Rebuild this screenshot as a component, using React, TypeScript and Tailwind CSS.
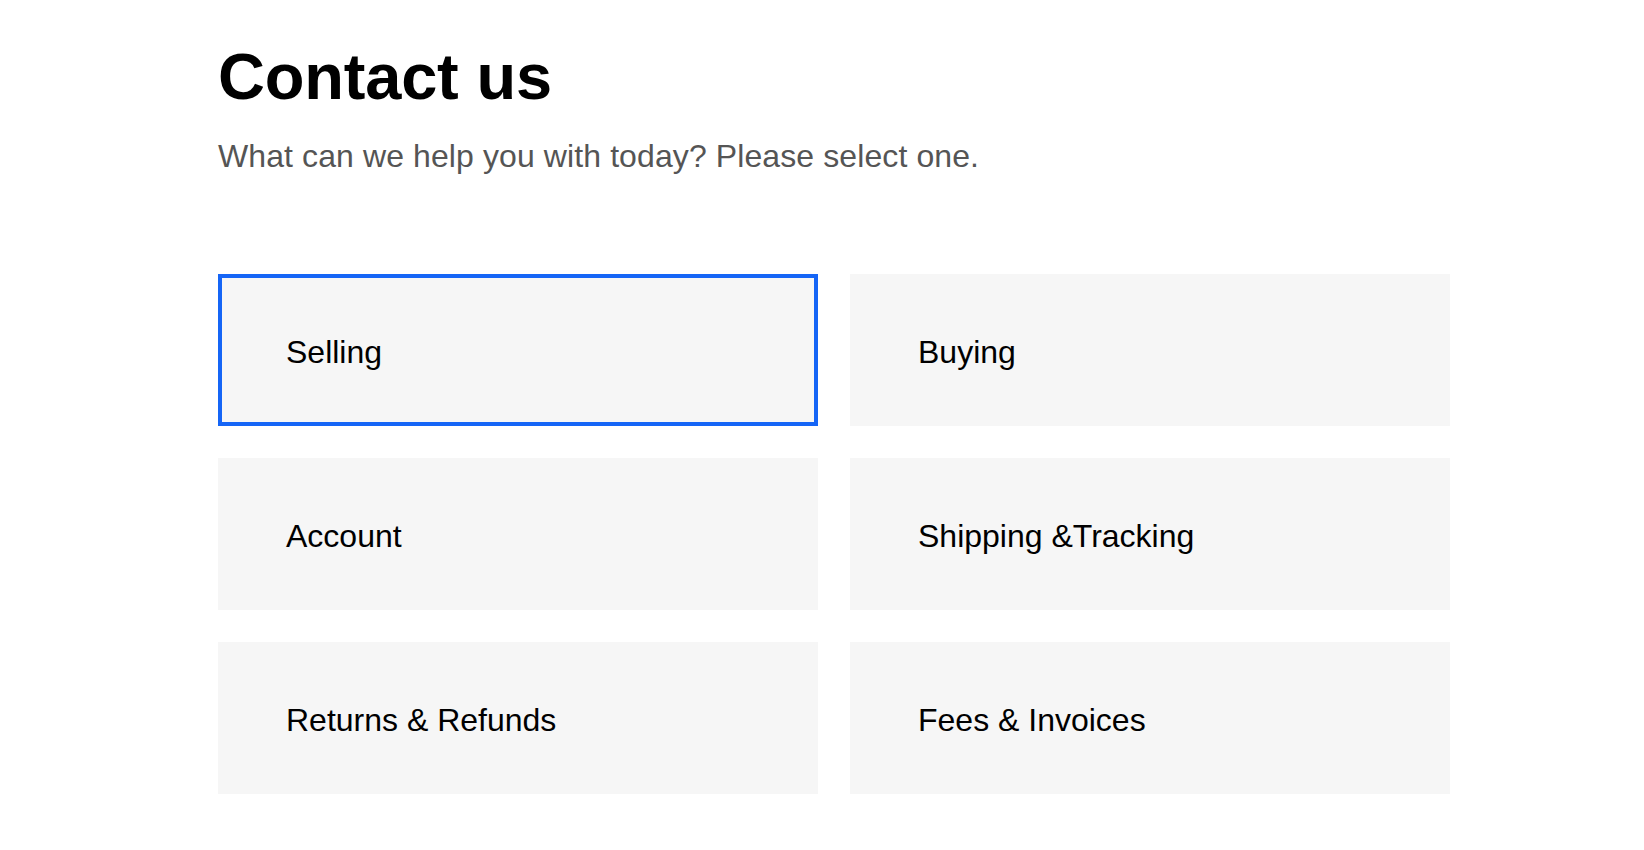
import { useState } from 'react'

const topics = [
  'Selling',
  'Buying',
  'Account',
  'Shipping &Tracking',
  'Returns & Refunds',
  'Fees & Invoices',
]

export default function App() {
  const [selected, setSelected] = useState('Selling')

  return (
    <div className="min-h-screen bg-white pl-[218px] pt-[44px] font-['Liberation_Sans',Arial,sans-serif] text-black">
      <h1 className="text-[65px] font-bold leading-none tracking-[-0.2px]">Contact us</h1>
      <p className="mt-[31px] text-[32px] leading-none tracking-[0.1px] text-[#555555]">
        What can we help you with today? Please select one.
      </p>
      <div className="mt-[102px] grid w-[1232px] grid-cols-2 gap-8">
        {topics.map((topic) => (
          <button
            key={topic}
            onClick={() => setSelected(topic)}
            className={`flex h-[152px] items-center border-4 bg-[#f6f6f6] pl-16 pt-[4px] text-left text-[32px] ${
              selected === topic ? 'border-[#1565f6]' : 'border-transparent'
            }`}
          >
            {topic}
          </button>
        ))}
      </div>
    </div>
  )
}
